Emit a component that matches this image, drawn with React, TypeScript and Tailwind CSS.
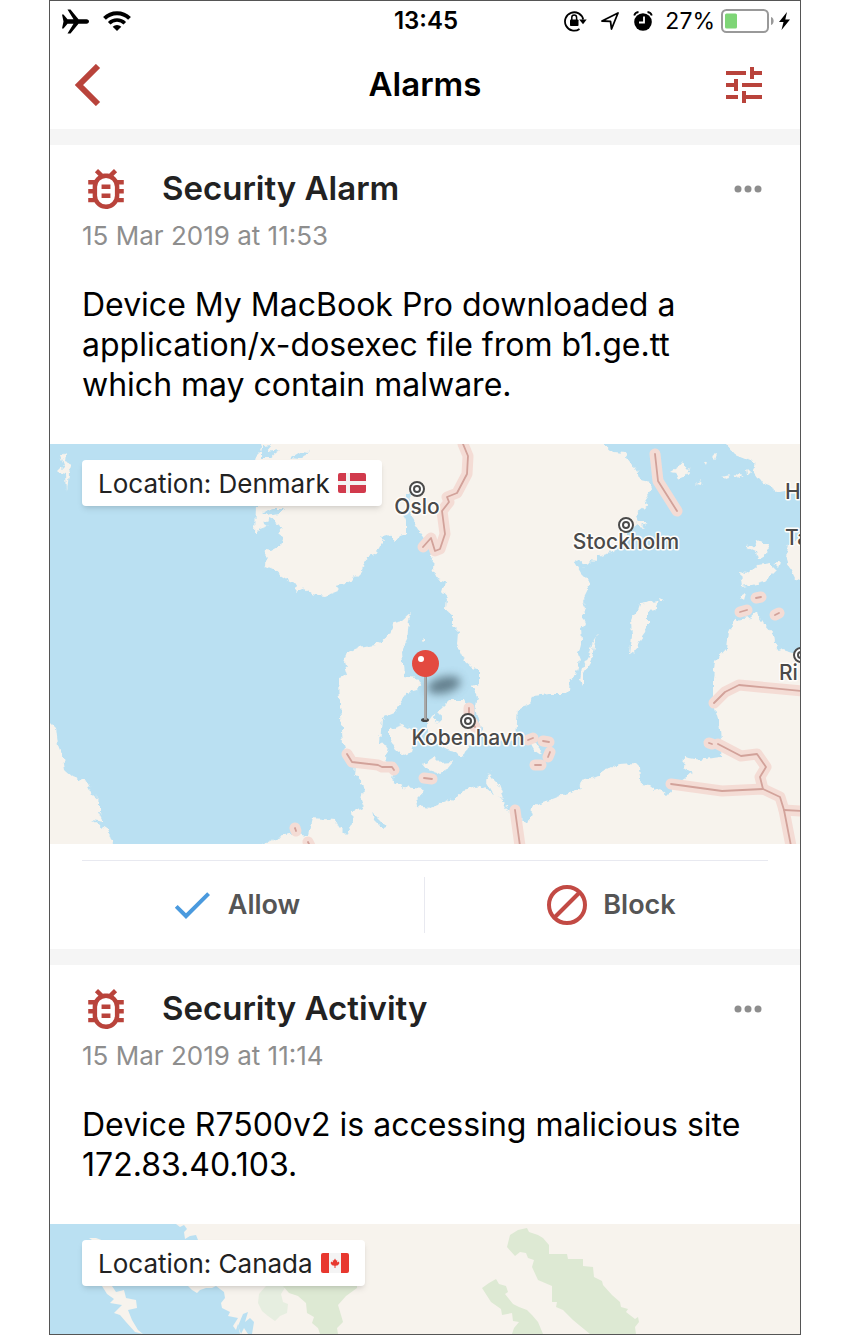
import React from "react";
import { MdTune } from "react-icons/md";

const BUG_PATH =
  "M20 8h-2.81c-.45-.8-1.07-1.5-1.82-2L17 4.41 15.59 3l-2.17 2.17C12.96 5.06 12.5 5 12 5s-.95.06-1.41.17L8.41 3 7 4.41 8.62 6C7.87 6.5 7.26 7.21 6.81 8H4v2h2.09C6.03 10.33 6 10.66 6 11v1H4v2h2v1c0 .34.04.67.09 1H4v2h2.81c1.66 2.87 5.33 3.84 8.19 2.18.91-.52 1.67-1.28 2.19-2.18H20v-2h-2.09c.05-.33.09-.66.09-1v-1h2v-2h-2v-1c0-.34-.04-.67-.09-1H20V8zm-4 7a4 4 0 0 1-8 0v-4a4 4 0 0 1 8 0v4zm-2-5v2h-4v-2h4zm-4 4h4v2h-4v-2z";

// coastlines of the Denmark map, drawn a little past its edges
const LAND = [
  "M256 430L262 452L256 458L262 470L258 490L256 506L255 534L260 529L268 526L262 522L272 518L276 524L283 528L277 532L284 538L281 545L272 550L266 549L265 566L272 569L280 576L290 582L298 585L296 592L304 588L312 594L325 596L338 591L336 586L345 584L352 580L362 570L366 558L376 554L384 540L380 536L388 535L396 541L400 536L406 534L406 520L403 512L408 504L412 514L415 524L420 532L428 543L430 556L433 558L432 568L438 580L445 582L442 592L447 598L446 610L452 615L452 626L458 632L457 645L464 660L473 668L479 670L479 684L472 686L477 696L475 708L480 725L483 735L490 742L516 739L518 708L530 704L532 696L550 694L565 694L569 690L570 680L576 675L580 660L578 655L582 640L581 628L586 625L583 618L586 608L582 600L587 590L590 582L580 572L574 562L580 560L584 568L590 561L597 562L597 556L610 552L620 545L628 538L628 530L638 524L636 514L648 505L645 496L652 488L650 482L640 480L636 468L628 462L625 453L612 452L603 444L590 430Z",
  "M411 613L403 620L394 622L388 634L380 643L360 647L348 652L344 662L348 675L339 678L340 705L342 730L343 745L346 755L356 764L355 775L364 785L361 800L364 808L352 811L353 824L346 834L338 826L335 820L312 818L308 836L297 834L277 837L263 844L250 860L820 860L820 650L800 655L790 652L776 648L774 635L764 624L757 612L750 618L735 620L729 632L727 648L716 660L714 680L714 705L719 722L721 740L720 757L700 760L684 757L683 767L693 773L680 781L668 795L660 788L655 790L650 786L641 785L639 768L635 764L620 765L605 769L600 776L582 780L579 789L568 793L550 800L534 805L528 822L520 820L507 810L503 800L492 794L485 788L480 786L463 790L457 797L443 803L430 808L417 806L416 800L421 795L423 789L403 787L392 780L394 770L388 766L385 757L388 747L380 743L382 718L397 712L400 703L407 693L418 690L420 680L404 677L402 650L407 640L409 620Z",
  "M390 728L402 724L412 730L415 742L412 752L404 755L396 749L390 740Z",
  "M428 722L432 716L442 708L450 700L465 700L468 710L472 724L480 734L468 746L462 758L456 752L447 750L438 745L428 738Z",
  "M423 764L434 757L440 763L453 762L448 768L438 773L428 770Z",
  "M530 745L536 743L541 749L540 756L534 752Z",
  "M485 779L490 772L492 778L499 785L504 799L495 797L488 785Z",
  "M659 601L655 610L648 611L648 629L640 640L634 652L630 655L632 636L631 620L638 610L640 604L650 602Z",
  "M598 635L594 645L592 660L584 674L584 688L580 680L582 668L590 654L592 644Z",
  "M740 572L742 587L752 585L764 582L776 570L770 564L758 566L746 574Z",
  "M745 547L755 546L757 540L768 545L767 554L758 559L756 552Z",
  "M715 430L725 444L735 455L745 459L756 463L752 471L757 478L765 483L772 486L775 492L785 490L820 490L820 430Z",
  "M820 590L800 580L795 578L790 568L786 556L789 544L800 536L820 530Z",
  "M30 715L50 722L56 728L58 745L63 758L65 770L73 777L86 782L93 795L99 800L99 812L104 822L92 820L108 830L113 844L116 860L30 860Z",
  "M60 455L66 453L65 462L72 465L69 474L67 491L66 474L58 472L64 466Z",
  "M670 472L678 467L682 462L686 469L690 470L684 477L679 479L677 473Z",
  "M440 492L444 490L442 494Z M420 640L424 636L424 641L421 643Z M659 598L664 600L660 602Z M696 484L702 480L699 486Z",
  "M740 596L746 593L744 600Z M638 521L648 521L642 525L646 528L638 527Z M440 572L448 577L450 583L443 580Z",
  "M704 463L707 461L706 466Z M712 456L718 454L716 460Z M722 476L730 474L727 478Z M735 474L744 476L738 479Z M746 468L750 472L747 475Z M774 564L780 562L778 568Z",
];

const BORDERS = [
  "M463 444L468 456L467 474L457 493L447 497L449 502L442 511L445 534L440 549L435 551L431 538L423 547",
  "M655 454L658 481L677 511",
  "M347 754L352 762L378 765L382 767L392 767L394 770",
  "M424 778L432 779",
  "M469 708L469 714M472 722L475 727",
  "M528 740L533 738",
  "M543 741L549 742",
  "M550 752L548 757",
  "M535 765L541 765",
  "M515 810L520 846",
  "M714 703L725 692L739 685L802 691",
  "M709 743L712 744",
  "M718 744L741 756L757 754L766 767L760 777L763 789",
  "M671 784L722 791L763 789L780 797L784 810L791 846",
  "M784 810L802 811",
  "M740 612L747 610",
  "M756 598L761 597",
  "M775 615L779 613",
  "M295 828L296 831",
  "M308 842L310 846",
];

const CITIES = [
  { name: "Oslo", x: 417, y: 514, cx: 417, cy: 489 },
  { name: "Stockholm", x: 626, y: 549, cx: 626, cy: 525 },
  { name: "Kobenhavn", x: 468, y: 745, cx: 468, cy: 721 },
];

function DenmarkMap() {
  return (
    <svg
      viewBox="50 444 750 400"
      preserveAspectRatio="xMidYMid slice"
      className="block h-[400px] w-full bg-[#bae0f2]"
      aria-label="Map of Denmark"
    >
      <defs>
        <filter id="coast" x="-5%" y="-5%" width="110%" height="110%">
          <feTurbulence type="fractalNoise" baseFrequency="0.16" numOctaves="2" seed="4" />
          <feDisplacementMap in="SourceGraphic" scale="7" xChannelSelector="R" yChannelSelector="G" />
        </filter>
        <filter id="soft" x="-60%" y="-60%" width="220%" height="220%">
          <feGaussianBlur stdDeviation="5" />
        </filter>
      </defs>
      <g fill="#f7f3ed" filter="url(#coast)">
        {LAND.map((d) => (
          <path key={d} d={d} />
        ))}
      </g>
      {/* sea inlets */}
      <g fill="#bae0f2" filter="url(#coast)">
        <path d="M262 512L275 508L284 508L278 514L268 516Z" />
        <path d="M290 458L302 451L310 452L300 459Z" />
        <path d="M262 446L272 445L266 452L280 450L270 458L262 458Z" />
        <path d="M574 562L590 564L588 568L578 567Z" />
        <path d="M372 812L378 818L386 826L382 828L374 820Z" />
        <path d="M406 494L412 493L409 502Z" />
        <path d="M436 710L442 716L438 724L434 718Z" />
      </g>
      <g fill="none" strokeLinecap="round" strokeLinejoin="round">
        <g stroke="#f4dcd5" strokeWidth="11">
          {BORDERS.map((d) => (
            <path key={d} d={d} />
          ))}
        </g>
        <g stroke="#d2a29a" strokeWidth="1.800">
          {BORDERS.map((d) => (
            <path key={d} d={d} />
          ))}
        </g>
      </g>
      <ellipse cx="444" cy="685" rx="17" ry="8" fill="#3c5560" opacity="0.7" transform="rotate(-14 444 685)" filter="url(#soft)" />
      <g fill="none" stroke="#4a4a4a" strokeWidth="2">
        {CITIES.map((c) => (
          <g key={c.name}>
            <circle cx={c.cx} cy={c.cy} r="7" fill="#fff" />
            <circle cx={c.cx} cy={c.cy} r="3" />
          </g>
        ))}
        <circle cx="801" cy="655" r="7" fill="#fff" />
        <circle cx="801" cy="655" r="3" />
      </g>
      <g
        fill="#4a4a4a"
        stroke="#fffdfa"
        strokeWidth="3"
        strokeLinejoin="round"
        paintOrder="stroke"
        className="text-[21px] font-medium"
      >
        {CITIES.map((c) => (
          <text key={c.name} x={c.x} y={c.y} textAnchor="middle">
            {c.name}
          </text>
        ))}
        <text x="785" y="499">H</text>
        <text x="785" y="545">Ta</text>
        <text x="779" y="680">Ri</text>
      </g>
      <ellipse cx="425" cy="720" rx="4" ry="2" fill="#444" />
      <path d="M425.500 674V720" stroke="#8f8f8f" strokeWidth="3" />
      <path d="M425 676V719" stroke="#c4c4c4" strokeWidth="1" />
      <circle cx="425.500" cy="663.500" r="13.500" fill="#e34a40" />
      <circle cx="421" cy="659" r="3" fill="#fff" />
    </svg>
  );
}

function CanadaMap() {
  return (
    <svg
      viewBox="50 1224 750 110"
      preserveAspectRatio="xMidYMid slice"
      className="block h-[110px] w-full bg-[#f7f3ed]"
      aria-label="Map of Canada"
    >
      <g fill="#bae0f2">
        <path d="M50 1224H176L180 1227L184 1225L187 1229L184 1232L185 1239L190 1236L196 1235L198 1240L190 1250L188 1286L192 1290L197 1293L200 1290L206 1288L212 1288L216 1286L224 1292L225 1298L221 1303L222 1308L230 1312L228 1316L238 1318L233 1326L236 1330L238 1324L240 1334L50 1334Z" />
        <path d="M243 1314L248 1312L245 1322L250 1318L254 1322L252 1334L248 1334L244 1328L241 1334L238 1326Z" />
      </g>
      <g fill="#f7f3ed">
        <path d="M102 1286L112 1286L116 1292L124 1290L126 1298L136 1300L137 1308L128 1310L132 1320L138 1330L143 1334L135 1332L126 1322L120 1315L114 1313L122 1305L110 1303L114 1299L107 1294Z" />
        <path d="M89 1238L96 1238L104 1241L98 1244Z" />
      </g>
      <path fill="#e6eee0" d="M258 1303L259 1294L266 1286L286 1286L281 1294L283 1302L288 1304L287 1313L280 1316L275 1321L268 1316L262 1311Z" />
      <g fill="#dde9d3">
        <path d="M283 1286L289 1293L298 1296L306 1303L307 1313L314 1317L312 1323L318 1328L320 1334H338L337 1328L343 1322L341 1315L338 1305L346 1296L357 1288L357 1286Z" />
        <path d="M510 1235L518 1230L527 1228L529 1232L538 1235L543 1238L549 1245V1254H567L568 1259H583V1266L593 1267L594 1277L602 1281L603 1285L612 1295L620 1302L621 1307L628 1309L626 1312L635 1319L638 1317L639 1322L635 1327L636 1334H590L579 1325L573 1320L563 1310L556 1307L557 1302L552 1302V1286L538 1280L532 1267L534 1260L528 1258L526 1253L520 1252L515 1256L507 1247Z" />
        <path d="M482 1288L489 1283L496 1279L499 1284L506 1286L508 1292L505 1294L513 1304L519 1307L527 1310L532 1315L538 1322L543 1334H512L514 1328L519 1322L513 1321L512 1313L502 1315L501 1309L491 1302Z" />
      </g>
    </svg>
  );
}

function DenmarkFlag() {
  return (
    <svg viewBox="0 0 28 20" className="h-5 w-7" aria-hidden="true">
      <rect width="28" height="20" rx="2" fill="#d13a4c" />
      <path d="M10 0V20M0 10H28" stroke="#f3f3f3" strokeWidth="4" />
    </svg>
  );
}

function CanadaFlag() {
  return (
    <svg viewBox="0 0 28 20" className="h-5 w-7" aria-hidden="true">
      <rect width="28" height="20" rx="2" fill="#e8382f" />
      <path d="M8 0H20V20H8Z" fill="#f4f4f4" />
      <path
        d="M14 5.500L15.200 7.500L16.300 7.200L16 9.500L17.500 8.600L18.500 10L17 12.200L14.500 12.700V15H13.500V12.700L11 12.200L9.500 10L10.500 8.600L12 9.500L11.700 7.200L12.800 7.500Z"
        fill="#e8382f"
      />
    </svg>
  );
}

function StatusBar() {
  return (
    <div className="grid h-10 grid-cols-[1fr_auto_1fr] items-center pr-2.5 pl-3">
      <div className="flex items-center gap-3.5">
        <svg viewBox="0 0 27 25" className="h-[25px] w-[27px]" aria-hidden="true">
          <path d="M0 5.500H1.500L5.500 10.300H11.500L5.500 0.500H8.500L16.500 10.300H24.500C26 10.300 27 11.300 27 12.500S26 14.700 24.500 14.700H16.500L8.500 24.500H5.500L11.500 14.700H5.500L1.500 19.500H0L1.500 12.500Z" />
        </svg>
        <svg viewBox="0 0 28 20" className="h-5 w-7" fill="none" stroke="#000" aria-hidden="true">
          <path d="M1.500 7.300A17.800 17.800 0 0 1 26.500 7.300" strokeWidth="4" />
          <path d="M6.200 12.200A11 11 0 0 1 21.800 12.200" strokeWidth="3.600" />
          <path d="M14 20L9.700 15.800A6.200 6.200 0 0 1 18.300 15.800Z" fill="#000" stroke="none" />
        </svg>
      </div>
      <time className="text-[24px] font-semibold">13:45</time>
      <div className="flex items-center justify-end">
        <svg viewBox="0 0 23 22" className="mr-3.5 h-[22px] w-[23px]" aria-hidden="true">
          <path d="M15.500 19A9.200 9.200 0 1 1 19.200 9.500" fill="none" stroke="#000" strokeWidth="1.800" />
          <path d="M15.200 9.500H22.700L19 14.200Z" />
          <rect x="6" y="9.500" width="8.500" height="6.500" rx="0.800" />
          <path d="M7.800 10V7.500A2.400 2.400 0 0 1 12.600 7.500V10" fill="none" stroke="#000" strokeWidth="1.500" />
        </svg>
        <svg viewBox="0 0 18 18" className="mr-3.5 h-[18px] w-[18px]" fill="none" stroke="#000" strokeWidth="1.800" strokeLinejoin="round" aria-hidden="true">
          <path d="M1 9L17 1L10.500 17L9.500 9.300Z" />
        </svg>
        <svg viewBox="0 0 20 20" className="mr-3 h-5 w-5" aria-hidden="true">
          <circle cx="10" cy="11" r="8.800" />
          <path d="M1.200 4.500A5 5 0 0 1 5.500 1M14.500 1A5 5 0 0 1 18.800 4.500" fill="none" stroke="#000" strokeWidth="1.800" />
          <path d="M11 5.500V11.500H6" fill="none" stroke="#fff" strokeWidth="1.800" />
        </svg>
        <span className="mr-1.5 text-[23px]">27%</span>
        <svg viewBox="0 0 54 24" className="mr-1 h-6 w-[54px]" aria-hidden="true">
          <rect x="1" y="1" width="46" height="22" rx="4.500" fill="none" stroke="#999" strokeWidth="2" />
          <rect x="4" y="4.500" width="12" height="15" rx="1.500" fill="#7ed576" />
          <path d="M50 8C53.500 9 53.500 15 50 16Z" fill="#999" />
        </svg>
        <svg viewBox="0 0 11 18" className="h-[18px] w-[11px]" aria-hidden="true">
          <path d="M8 0L0 10H4.500L2.500 18L11 7.500H6.300Z" />
        </svg>
      </div>
    </div>
  );
}

type AlarmCardProps = {
  title: string;
  date: string;
  message: string;
  country: string;
  flag: React.ReactNode;
  map: React.ReactNode;
  children?: React.ReactNode;
};

function AlarmCard({ title, date, message, country, flag, map, children }: AlarmCardProps) {
  return (
    <article className="border-t-[16px] border-[#f5f5f5] bg-white pt-5">
      <div className="flex h-12 items-center px-8">
        <div className="w-20 shrink-0 pl-1.5">
          <svg viewBox="4 3 16 18" className="h-10 w-9" fill="#b9433b" aria-hidden="true">
            <path d={BUG_PATH} />
          </svg>
        </div>
        <h2 className="flex-1 text-[33px] font-semibold text-[#222]">{title}</h2>
        <button type="button" aria-label="More options" className="flex h-10 w-10 items-center justify-center">
          <svg viewBox="0 0 28 8" className="h-2 w-7" fill="#8e8e8e">
            <circle cx="4" cy="4" r="3.500" />
            <circle cx="14" cy="4" r="3.500" />
            <circle cx="24" cy="4" r="3.500" />
          </svg>
        </button>
      </div>
      <p className="mt-2 px-8 text-[26px] leading-[30px] text-[#8e8e8e]">{date}</p>
      <p className="mt-[34px] px-8 pb-[39px] text-[32px] leading-[40px] text-black">{message}</p>
      <div className="relative overflow-hidden">
        {map}
        <div className="absolute top-4 left-8 flex h-[46px] items-center gap-2 rounded bg-white px-4 text-[26px] text-[#222] shadow-md">
          Location: {country} {flag}
        </div>
      </div>
      {children}
    </article>
  );
}

export default function App() {
  return (
    <div className="bg-white pr-12 pl-[49px] font-['Inter',sans-serif] text-black">
      <main className="overflow-hidden border border-[#555]">
        <StatusBar />
        <header className="grid h-[88px] grid-cols-[1fr_auto_1fr] items-center px-6">
          <button type="button" aria-label="Back" className="flex h-12 w-12 items-center">
            <svg viewBox="0 0 28 42" className="h-[42px] w-7" fill="none" stroke="#b9433b" strokeWidth="6">
              <path d="M24 2L5 21L24 40" />
            </svg>
          </button>
          <h1 className="text-[33px] font-semibold">Alarms</h1>
          <button type="button" aria-label="Filter" className="mr-2 justify-self-end text-[#b9433b]">
            <MdTune size={48} />
          </button>
        </header>

        <AlarmCard
          title="Security Alarm"
          date="15 Mar 2019 at 11:53"
          message="Device My MacBook Pro downloaded a application/x-dosexec file from b1.ge.tt which may contain malware."
          country="Denmark"
          flag={<DenmarkFlag />}
          map={<DenmarkMap />}
        >
          <hr className="mx-8 mt-4 border-[#e8e9f0]" />
          <div className="grid grid-cols-2 py-4 text-[27px] font-semibold text-[#555]">
            <button type="button" className="flex h-14 items-center justify-center gap-3 border-r border-[#e8e9f0] pr-1.5">
              <svg viewBox="0 0 24 24" className="h-12 w-12" fill="#4a9ade" aria-hidden="true">
                <path d="M9 16.170L4.830 12l-1.420 1.410L9 19 21 7l-1.410-1.410z" />
              </svg>
              Allow
            </button>
            <button type="button" className="flex h-14 items-center justify-center gap-3 pr-1.5">
              <svg viewBox="0 0 48 48" className="h-12 w-12" fill="none" stroke="#c24a44" strokeWidth="4" aria-hidden="true">
                <circle cx="24" cy="24" r="18" />
                <path d="M11.500 36.500L36.500 11.500" />
              </svg>
              Block
            </button>
          </div>
        </AlarmCard>

        <AlarmCard
          title="Security Activity"
          date="15 Mar 2019 at 11:14"
          message="Device R7500v2 is accessing malicious site 172.83.40.103."
          country="Canada"
          flag={<CanadaFlag />}
          map={<CanadaMap />}
        />
      </main>
    </div>
  );
}
